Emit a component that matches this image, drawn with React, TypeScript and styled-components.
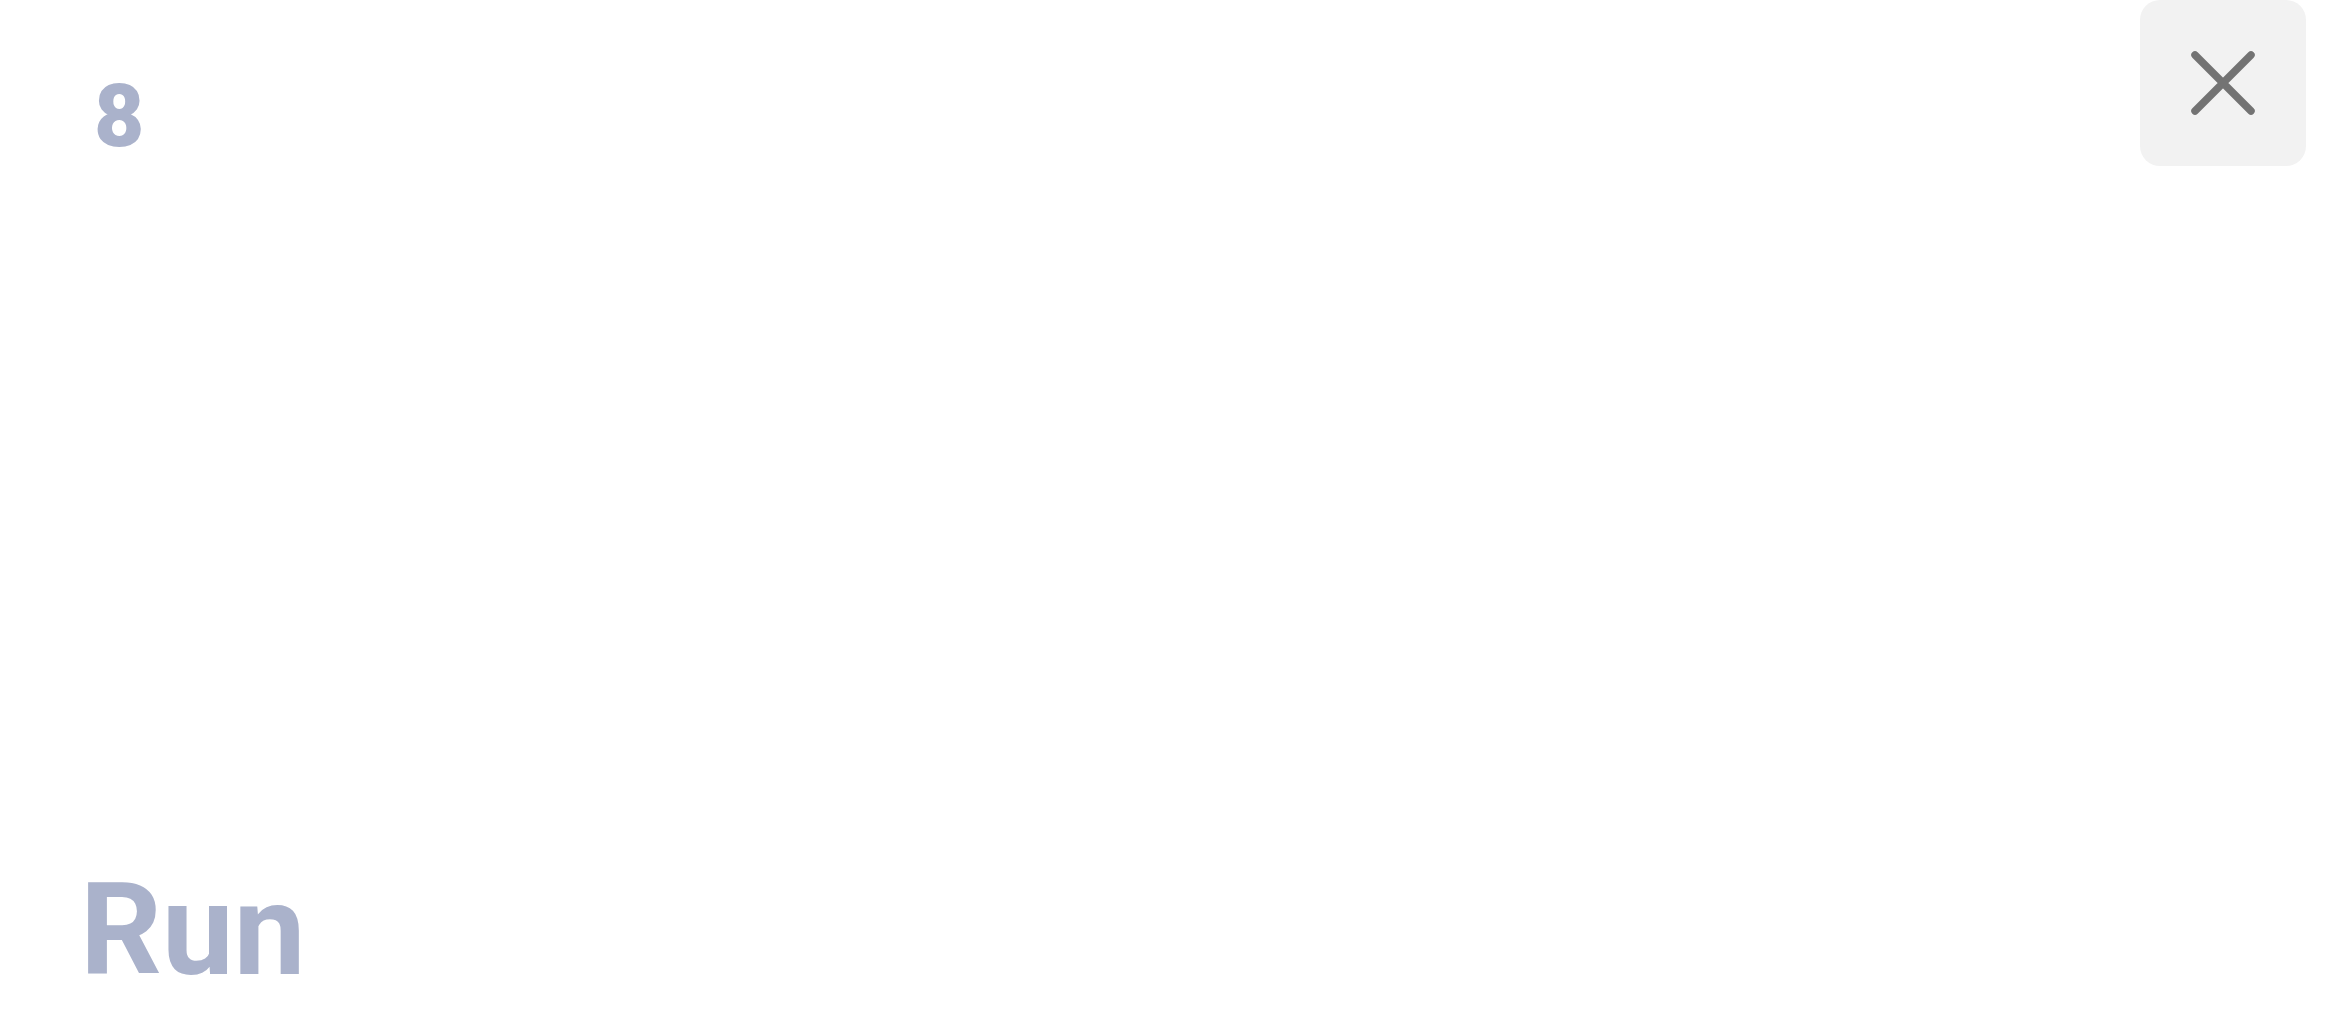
import React from "react";
import styled, { createGlobalStyle } from "styled-components";

const GlobalStyle = createGlobalStyle`
  html, body {
    margin: 0;
    padding: 0;
    background: #ffffff;
    font-family: Roboto, "Noto Sans", sans-serif;
  }
`;

const Page = styled.main`
  height: 100vh;
  box-sizing: border-box;
  display: flex;
  flex-direction: column;
  justify-content: space-between;
  padding: 0 25px 38px 80px;
`;

const TopRow = styled.div`
  display: flex;
  justify-content: space-between;
  align-items: flex-start;
`;

const StepNumber = styled.span`
  margin-top: 73px;
  margin-left: 14px;
  font-size: 87px;
  font-weight: 900;
  line-height: 1;
  color: #aab2cb;
`;

const CloseButton = styled.button`
  width: 166px;
  height: 166px;
  display: flex;
  align-items: center;
  justify-content: center;
  padding: 0;
  border: none;
  border-radius: 20px;
  background-color: #f2f2f2;
  color: #737373;
  cursor: pointer;
`;

const Title = styled.h1`
  margin: 0;
  font-size: 128px;
  font-weight: 700;
  line-height: 1;
  color: #aab2cb;
`;

function CloseIcon() {
  return (
    <svg width="64" height="64" viewBox="0 0 64 64" fill="none">
      <path
        d="M4 4L60 60M60 4L4 60"
        stroke="currentColor"
        strokeWidth="7.5"
        strokeLinecap="round"
      />
    </svg>
  );
}

function App() {
  return (
    <>
      <GlobalStyle />
      <Page>
        <TopRow>
          <StepNumber>8</StepNumber>
          <CloseButton aria-label="Close">
            <CloseIcon />
          </CloseButton>
        </TopRow>
        <Title>Run</Title>
      </Page>
    </>
  );
}

export default App;
